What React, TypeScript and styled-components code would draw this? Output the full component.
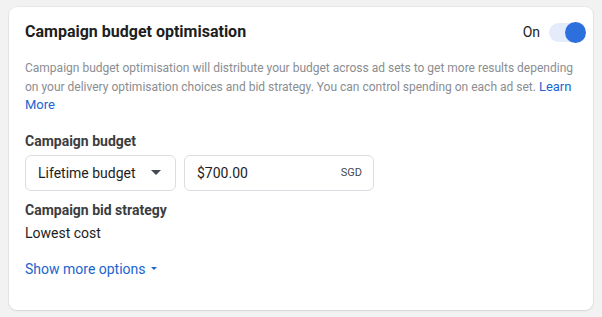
import styled, { createGlobalStyle } from 'styled-components'

const GlobalStyle = createGlobalStyle`
  html, body {
    margin: 0;
    padding: 0;
    background: #f2f2f2;
  }
  body {
    font-family: Roboto, 'Liberation Sans', Arial, sans-serif;
    -webkit-font-smoothing: antialiased;
  }
`

const Page = styled.div`
  padding: 7px 9px;
`

const Card = styled.section`
  box-sizing: border-box;
  width: 584px;
  height: 303px;
  background: #fff;
  border-radius: 8px;
  box-shadow: 0 0 0 1px rgba(0, 0, 0, 0.04), 0 1px 2px rgba(0, 0, 0, 0.08);
  padding: 15px 16px 0 16px;
  display: flex;
  flex-direction: column;
`

const Header = styled.div`
  display: flex;
  align-items: center;
  justify-content: space-between;
  height: 20px;
  margin-right: -8px;
`

const Title = styled.h2`
  margin: 0;
  font-size: 16px;
  line-height: 20px;
  font-weight: 700;
  color: #1c1e21;
`

const ToggleWrap = styled.label`
  display: flex;
  align-items: center;
  gap: 9px;
  font-size: 14px;
  color: #1c1e21;
`

const Track = styled.span<{ $on: boolean }>`
  position: relative;
  display: inline-block;
  width: 36px;
  height: 19px;
  border-radius: 10px;
  background: ${p => (p.$on ? '#e4ecfb' : '#e4e6eb')};
`

const Knob = styled.span<{ $on: boolean }>`
  position: absolute;
  top: -1px;
  left: ${p => (p.$on ? '16px' : '0')};
  width: 21px;
  height: 21px;
  border-radius: 50%;
  background: ${p => (p.$on ? '#2d6fdd' : '#fff')};
`

const Description = styled.p`
  margin: 17px 0 0 0;
  font-size: 12px;
  line-height: 18.5px;
  color: #8a8d91;
  white-space: nowrap;
`

const Link = styled.a`
  color: #2064cf;
  font-size: 13px;
  text-decoration: none;
  cursor: pointer;
`

const Label = styled.div<{ $gap: number }>`
  margin-top: ${p => p.$gap}px;
  font-size: 14px;
  line-height: 18px;
  font-weight: 700;
  color: #3b3d40;
`

const Fields = styled.div`
  display: flex;
  gap: 8px;
  margin-top: 5px;
`

const Box = styled.div<{ $width: number }>`
  box-sizing: border-box;
  width: ${p => p.$width}px;
  height: 36px;
  border: 1px solid #dadde1;
  border-radius: 6px;
  display: flex;
  align-items: center;
  justify-content: space-between;
  padding: 0 11px 0 12px;
  font-size: 14px;
  color: #1c1e21;
`

const Caret = styled.span<{ $size: number; $color: string }>`
  display: inline-block;
  width: 0;
  height: 0;
  border-left: ${p => p.$size}px solid transparent;
  border-right: ${p => p.$size}px solid transparent;
  border-top: ${p => p.$size}px solid ${p => p.$color};
`

const Currency = styled.span`
  font-size: 11px;
  color: #444950;
`

const Value = styled.div`
  margin-top: 5px;
  font-size: 14px;
  line-height: 18px;
  color: #1c1e21;
`

const MoreLink = styled.a`
  margin-top: 18px;
  display: inline-flex;
  align-items: center;
  gap: 5px;
  font-size: 14px;
  line-height: 18px;
  color: #2064cf;
  cursor: pointer;
  align-self: flex-start;
`

export default function App() {
  return (
    <>
      <GlobalStyle />
      <Page>
        <Card>
          <Header>
            <Title>Campaign budget optimisation</Title>
            <ToggleWrap>
              On
              <Track $on>
                <Knob $on />
              </Track>
            </ToggleWrap>
          </Header>
          <Description>
            Campaign budget optimisation will distribute your budget across ad sets to get more results depending
            <br />
            on your delivery optimisation choices and bid strategy. You can control spending on each ad set.{' '}
            <Link>
              Learn
              <br />
              More
            </Link>
          </Description>

          <Label $gap={17}>Campaign budget</Label>
          <Fields>
            <Box $width={151}>
              <span>Lifetime budget</span>
              <Caret $size={5} $color="#444950" style={{ marginRight: 3 }} />
            </Box>
            <Box $width={190}>
              <span>$700.00</span>
              <Currency>SGD</Currency>
            </Box>
          </Fields>

          <Label $gap={10}>Campaign bid strategy</Label>
          <Value>Lowest cost</Value>

          <MoreLink>
            Show more options
            <Caret $size={3.5} $color="#2064cf" />
          </MoreLink>
        </Card>
      </Page>
    </>
  )
}
